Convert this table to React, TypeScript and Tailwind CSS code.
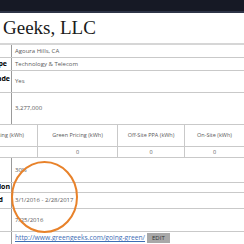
import React from "react";

const line = "border-b border-[#c9c9c9]";

function Row({ label, value, h, labelTop, pr = "pr-[1px]" }: { label?: string; value?: React.ReactNode; h: string; labelTop?: boolean; pr?: string }) {
  return (
    <div className={`grid grid-cols-[12px_1fr] ${h} ${line}`}>
      <div className={`flex justify-end overflow-hidden border-r border-[#9a9a9a] ${pr} font-bold text-[7px] text-black whitespace-nowrap ${labelTop ? "items-start pt-[3px]" : "items-center"}`}>
        {label}
      </div>
      <div className="flex items-center pl-[3px] text-[6px] text-[#5a5a5a] whitespace-nowrap">{value}</div>
    </div>
  );
}

export default function App() {
  const cols = ["Green Pricing (kWh)", "Off-Site PPA (kWh)", "On-Site (kWh)"];
  return (
    <div className="relative w-[244px] h-[244px] overflow-hidden bg-white" style={{ fontFamily: '"Open Sans", sans-serif' }}>
      <div className="h-[13px] bg-[#161925] border-b-2 border-[#2e3447]" />
      <div className={`h-[32px] pl-[3px] pt-[3px] ${line} border-[#d6d6d6] border-b-2`}>
        <h1 className="text-[19px] leading-[24px] text-[#1a1a1a]" style={{ fontFamily: '"Liberation Serif", serif' }}>Geeks, LLC</h1>
      </div>
      <Row h="h-[13px]" value="Agoura Hills, CA" />
      <Row h="h-[13px]" label="Type" value="Technology & Telecom" pr="pr-[4px]" />
      <Row h="h-[22px]" label="Grade" value="Yes" labelTop />
      <Row h="h-[32px]" value="3,277,000" />

      <div className={`grid grid-cols-[38px_80px_67px_1fr] h-[22px] ${line} text-[5.5px] text-[#5a5a5a]`}>
        <div className="flex items-center justify-end overflow-hidden whitespace-nowrap pr-[13px] border-r border-[#c9c9c9]">Purchasing (kWh)</div>
        {cols.map((c, i) => (
          <div key={c} className={`flex items-center justify-center whitespace-nowrap ${i < 2 ? "border-r border-[#c9c9c9]" : ""}`}>{c}</div>
        ))}
      </div>
      <div className={`grid grid-cols-[38px_80px_67px_1fr] h-[11px] ${line} text-[5.5px] text-[#5a5a5a]`}>
        <div className="border-r border-[#c9c9c9]" />
        {[0, 1, 2].map((i) => (
          <div key={i} className={`flex items-center justify-center ${i < 2 ? "border-r border-[#c9c9c9]" : ""}`}>0</div>
        ))}
      </div>

      <Row h="h-[25px]" value="30%" />
      <Row h="h-[10px]" label="Certification" />
      <Row h="h-[16px]" label="Period" value="3/1/2016 - 2/28/2017" pr="pr-[8px]" />
      <Row h="h-[23px]" value="7/25/2016" />
      <Row
        h="h-[14px]"
        value={
          <span className="flex items-center gap-[2px]">
            <span className="text-[#3d6db5] underline text-[6.7px]">http://www.greengeeks.com/going-green/</span>
            <span className="bg-[#a8a8a8] text-[#333] text-[6px] leading-[10px] px-[5px]">EDIT</span>
          </span>
        }
      />

      <svg className="absolute left-0 top-0 pointer-events-none" width="244" height="244">
        <ellipse cx="44.5" cy="197" rx="32.5" ry="35" fill="none" stroke="#e8822a" strokeWidth="2" />
      </svg>
    </div>
  );
}
